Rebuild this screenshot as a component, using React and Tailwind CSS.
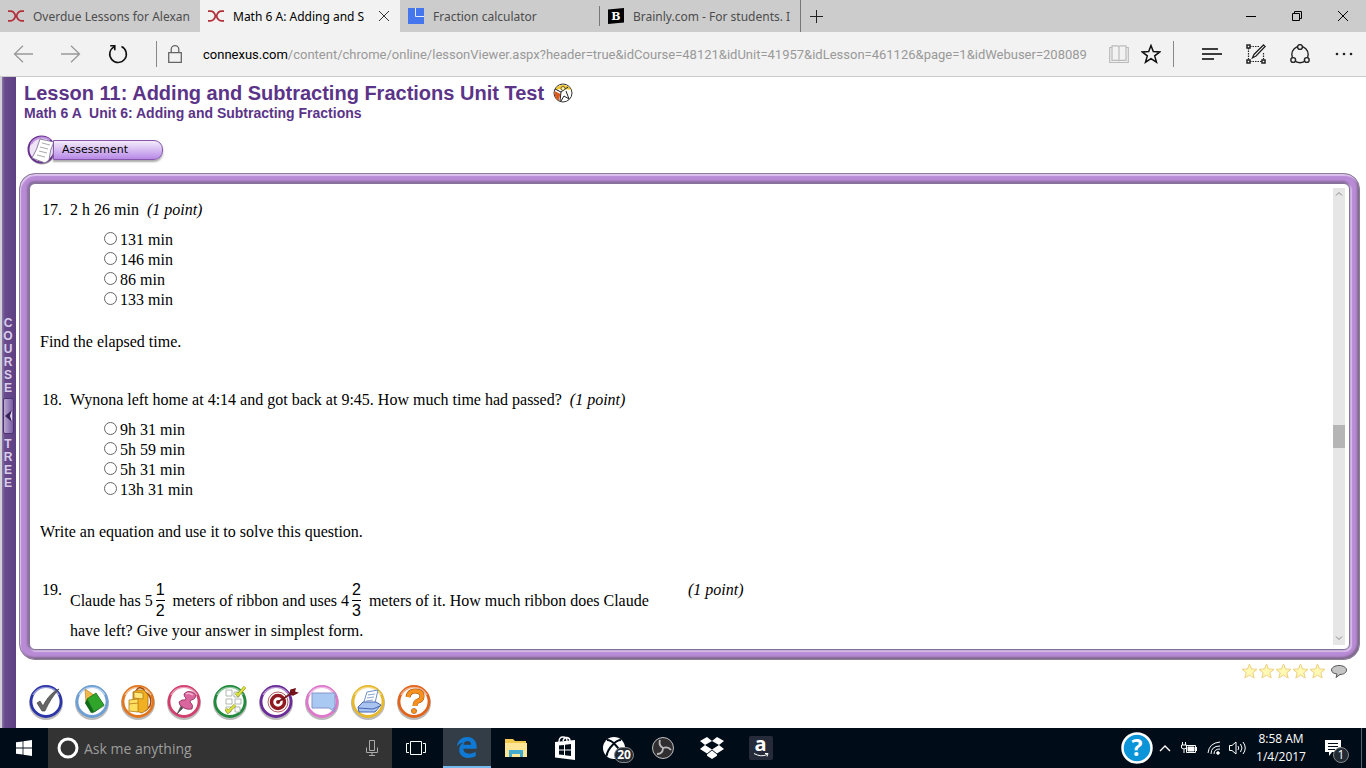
import { useState } from 'react';

const tabs = [
    { title: 'Overdue Lessons for Alexan', icon: 'connexus' },
    { title: 'Math 6 A: Adding and S', icon: 'connexus', active: true },
    { title: 'Fraction calculator', icon: 'calc' },
    { title: 'Brainly.com - For students. I', icon: 'brainly' },
];

const questions = [
    {
        id: 'q17',
        number: '17.',
        text: '2 h 26 min',
        options: ['131 min', '146 min', '86 min', '133 min'],
        next: 'Find the elapsed time.',
    },
    {
        id: 'q18',
        number: '18.',
        text: 'Wynona left home at 4:14 and got back at 9:45. How much time had passed?',
        options: ['9h 31 min', '5h 59 min', '5h 31 min', '13h 31 min'],
        next: 'Write an equation and use it to solve this question.',
    },
];

const TabIcon = ({ name }) => {
    if (name === 'connexus') {
        return (
            <svg viewBox="0 0 16 16" className="h-4 w-4 shrink-0" fill="none" stroke="#b3303a" strokeWidth="1.8" aria-hidden="true">
                <path d="M0 3.2h2.500Q6 3.200 7.500 8q-1.500 4.800-5 4.800H0M16 3.2h-2.500Q10 3.200 8.500 8q1.500 4.800 5 4.800H16M7 8h2" />
            </svg>
        );
    }
    if (name === 'calc') {
        return (
            <svg viewBox="0 0 16 16" className="h-4 w-4 shrink-0" aria-hidden="true">
                <path fill="#4576ee" d="M0 0h16v16H0z" />
                <path fill="none" stroke="#e4ecff" d="M7.500 0v8.500H16" />
            </svg>
        );
    }
    return (
        <svg viewBox="0 0 16 16" className="h-4 w-4 shrink-0" aria-hidden="true">
            <path fill="#000" d="M0 1.500L16 0v14.500L0 16z" />
            <text x="8" y="12" textAnchor="middle" fontSize="11" fontWeight="bold" fontFamily="DejaVu Serif, serif" fill="#fff">B</text>
        </svg>
    );
};

const TabBar = () => (
    <div className="flex h-8 shrink-0 items-stretch bg-[#cccccc] font-[Noto_Sans,sans-serif] text-xs">
        {tabs.map((tab, i) => (
            <div
                key={tab.title}
                className={
                    tab.active
                        ? 'flex w-[200px] items-center bg-[#f2f2f2] pl-2 text-black'
                        : 'flex w-[200px] items-center pl-2 text-[#4c4c4c]'
                }
            >
                <TabIcon name={tab.icon} />
                <span className={tab.active ? 'ml-[9px] w-[137px] pt-px whitespace-nowrap' : 'ml-[9px] pt-px whitespace-nowrap'}>
                    {tab.title}
                </span>
                {tab.active && (
                    <button type="button" aria-label="Close tab" className="ml-2">
                        <svg viewBox="0 0 12 12" className="h-3 w-3" stroke="#333" fill="none" aria-hidden="true">
                            <path d="M1 1l10 10M11 1L1 11" />
                        </svg>
                    </button>
                )}
                {i === 2 && <span className="ml-auto h-5 w-px bg-[#777]" />}
            </div>
        ))}
        <button type="button" aria-label="New tab" className="flex w-8 items-center justify-center border-l border-[#777]">
            <svg viewBox="0 0 13 13" className="h-[13px] w-[13px]" stroke="#222" fill="none" aria-hidden="true">
                <path d="M6.500 0v13M0 6.500h13" />
            </svg>
        </button>
        <div className="ml-auto flex">
            <button type="button" aria-label="Minimize" className="flex w-[46px] items-center justify-center">
                <svg viewBox="0 0 10 10" className="h-[10px] w-[10px]" stroke="#000" fill="none"><path d="M0 5.500h10" /></svg>
            </button>
            <button type="button" aria-label="Restore" className="flex w-[46px] items-center justify-center">
                <svg viewBox="0 0 10 10" className="h-[10px] w-[10px]" stroke="#000" fill="none"><path d="M.5 2.500h7v7h-7zM2.500 2.500v-2h7v7h-2" /></svg>
            </button>
            <button type="button" aria-label="Close" className="flex w-[46px] items-center justify-center">
                <svg viewBox="0 0 10 10" className="h-[10px] w-[10px]" stroke="#000" fill="none"><path d="M0 0l10 10M10 0L0 10" /></svg>
            </button>
        </div>
    </div>
);

const AddressBar = () => (
    <div className="flex h-[45px] shrink-0 items-center border-b border-[#cccccc] bg-[#f2f2f2]">
        <button type="button" aria-label="Back" className="ml-[13px]">
            <svg viewBox="0 0 20 18" className="h-[18px] w-5" fill="none" stroke="#999" strokeWidth="1.300"><path d="M20 9H1.500M10 .8L1.500 9l8.500 8.200" /></svg>
        </button>
        <button type="button" aria-label="Forward" className="ml-7">
            <svg viewBox="0 0 20 18" className="h-[18px] w-5" fill="none" stroke="#999" strokeWidth="1.300"><path d="M0 9h18.500M10 .8L18.500 9 10 17.200" /></svg>
        </button>
        <button type="button" aria-label="Refresh" className="ml-[27px]">
            <svg viewBox="0 0 20 20" className="h-5 w-5" fill="none" stroke="#111" strokeWidth="1.600"><path d="M13.500 2.600A8.300 8.300 0 1 1 6 2.900M2.200 1.700h4.600v4.600" /></svg>
        </button>
        <span className="ml-7 h-[26px] w-px bg-[#888]" />
        <svg viewBox="0 0 14 18" className="ml-[11px] h-[18px] w-[14px] shrink-0" fill="none" stroke="#666" strokeWidth="1.300" aria-hidden="true">
            <path d="M.7 7.700h12.600v9.600H.7zM3.200 7.700V4.500a3.800 3.800 0 0 1 7.600 0v3.200" />
        </svg>
        <div className="ml-[21px] min-w-0 flex-1 pt-px font-[Roboto,sans-serif] text-[13px] whitespace-nowrap text-[#999]">
            <span className="text-black">connexus.com</span>
            /content/chrome/online/lessonViewer.aspx?header=true&amp;idCourse=48121&amp;idUnit=41957&amp;idLesson=461126&amp;page=1&amp;idWebuser=208089
        </div>
        <button type="button" aria-label="Reading view" className="ml-2">
            <svg viewBox="0 0 20 18" className="h-[18px] w-5" fill="none" stroke="#bbb" strokeWidth="1.200"><path d="M3 .8h5.500q1.500 0 1.500 1.500v14q0-1-1.500-1H3zM17 .8h-5.500q-1.500 0-1.500 1.500v14q0-1 1.500-1H17zM3 2.500H.7v15h18.600v-15H17" /></svg>
        </button>
        <button type="button" aria-label="Favorite" className="ml-3">
            <svg viewBox="0 0 20 20" className="h-5 w-5" fill="none" stroke="#111" strokeWidth="1.500"><path d="M10 1.500l2.300 6.100 6.500.3-5.100 4 1.800 6.300L10 14.600l-5.500 3.600 1.800-6.300-5.100-4 6.500-.3z" /></svg>
        </button>
        <span className="ml-3 h-[26px] w-px bg-[#888]" />
        <button type="button" aria-label="Hub" className="ml-7">
            <svg viewBox="0 0 20 12" className="h-3 w-5" stroke="#000" strokeWidth="1.300"><path d="M0 1h16M0 6h20M0 11h12" /></svg>
        </button>
        <button type="button" aria-label="Make a web note" className="ml-6">
            <svg viewBox="0 0 20 20" className="h-5 w-5" fill="none" stroke="#222">
                <path strokeWidth="1.200" strokeDasharray="1.500 1" d="M4 2.500h9M2.500 4v12M4 17.500h12M17.500 9v7" />
                <path fill="#fff" strokeWidth="1.500" d="M1 1h3v3H1zM1 16h3v3H1zM16 16h3v3h-3z" />
                <path fill="#fff" strokeWidth="1.300" d="M17.500 1l1.600 1.500L10 12l-3.500 1.800L8 10.500z" />
            </svg>
        </button>
        <button type="button" aria-label="Share" className="ml-6">
            <svg viewBox="0 0 20 20" className="h-5 w-5" fill="none" stroke="#222" strokeWidth="1.400">
                <circle cx="10" cy="10.500" r="8.200" />
                <g fill="#f2f2f2"><circle cx="10" cy="3" r="2.400" /><circle cx="3.200" cy="16" r="2.400" /><circle cx="16.800" cy="16" r="2.400" /></g>
            </svg>
        </button>
        <button type="button" aria-label="More" className="ml-6 mr-3">
            <svg viewBox="0 0 20 4" className="h-1 w-5" fill="#222"><circle cx="3" cy="2" r="1.300" /><circle cx="10" cy="2" r="1.300" /><circle cx="17" cy="2" r="1.300" /></svg>
        </button>
    </div>
);

const CourseTree = () => (
    <aside className="flex w-4 shrink-0 flex-col items-center border-l-2 border-[#d4d0da] bg-linear-to-r from-[#8b79a3] via-[#694a8d] via-20% to-[#5d4183] pt-60 pr-[2px] font-[Liberation_Sans,sans-serif] text-xs leading-[13px] font-bold text-[#d9cde8]">
        {'COURSE'.split('').map((c, i) => <span key={i}>{c}</span>)}
        <button type="button" aria-label="Toggle course tree" className="mt-[3px] mb-1 flex h-9 w-[11px] items-center justify-center rounded-xs border border-[#4b3470] bg-linear-to-r from-[#b9a7d0] to-[#7b5ca4]">
            <svg viewBox="0 0 7 12" className="h-3 w-[7px]"><path d="M7 0v12L0 6z" fill="#3a2358" /><path d="M7 0v12L5 6z" fill="#e3d8f0" /></svg>
        </button>
        {'TREE'.split('').map((c, i) => <span key={i}>{c}</span>)}
    </aside>
);

const Fraction = ({ top, bottom }) => (
    <span className="mr-2 ml-[3px] flex flex-col items-center font-[Liberation_Sans,sans-serif] leading-5">
        <span className="h-[21px] border-b border-black">{top}</span>
        <span className="h-5">{bottom}</span>
    </span>
);

const Question = ({ q, value, onChange }) => (
    <>
        <fieldset>
            <legend className="flex h-5 items-center">
                <span className="w-7 pl-[2px]">{q.number}</span>
                <span className="ml-[2px]">{q.text}</span>
                <i className="ml-2">(1 point)</i>
            </legend>
            <div className="mt-[10px] ml-16 flex flex-col">
                {q.options.map((opt) => (
                    <label key={opt} className="flex h-5 items-center">
                        <input
                            type="radio"
                            name={q.id}
                            checked={value === opt}
                            onChange={() => onChange(opt)}
                            className="mr-[3px] mb-[3px] h-[13px] w-[13px] appearance-none rounded-full border border-[#666] bg-white checked:border-4"
                        />
                        {opt}
                    </label>
                ))}
            </div>
        </fieldset>
        <p className="mt-[22px] mb-[38px] h-5">{q.next}</p>
    </>
);

const Assessment = () => {
    const [answers, setAnswers] = useState({});

    return (
        <section className="flex min-h-0 flex-1 rounded-[16px] border border-[#8b7f94] bg-[#b98ad6] p-[9px] shadow-[inset_1px_2px_1px_#dcc3ee,inset_-2px_-2px_2px_#7f6a8c]">
            <div className="flex min-w-0 flex-1 rounded-[6px] border border-[#86739a] bg-white p-1 pl-[10px] shadow-[-1px_-1px_2px_1px_#8a6fa0,1px_1px_1px_1px_#dcc3ee]">
                <div className="min-h-0 min-w-0 flex-1 overflow-hidden pt-3 font-[Liberation_Serif,serif] text-base leading-5 text-black">
                    {questions.map((q) => (
                        <Question
                            key={q.id}
                            q={q}
                            value={answers[q.id]}
                            onChange={(v) => setAnswers({ ...answers, [q.id]: v })}
                        />
                    ))}
                    <div className="flex">
                        <span className="w-7 shrink-0 pl-[2px]">19.</span>
                        <div className="ml-[2px] w-[618px]">
                            <div className="flex items-center whitespace-nowrap">
                                <span>Claude has 5</span>
                                <Fraction top="1" bottom="2" />
                                <span>meters of ribbon and uses 4</span>
                                <Fraction top="2" bottom="3" />
                                <span>meters of it. How much ribbon does Claude</span>
                            </div>
                            <p>have left? Give your answer in simplest form.</p>
                        </div>
                        <i>(1 point)</i>
                    </div>
                </div>
                <div className="flex w-3 flex-col items-center bg-[#e6e6e6]">
                    <svg viewBox="0 0 8 5" className="mt-[3px] h-[5px] w-2 shrink-0" fill="none" stroke="#888"><path d="M1 4.500l3-3 3 3" /></svg>
                    <div className="flex-1" />
                    <div className="h-[23px] w-full bg-[#b5b5b5]" />
                    <div className="h-[188px]" />
                    <svg viewBox="0 0 8 5" className="mb-1 h-[5px] w-2 shrink-0" fill="none" stroke="#888"><path d="M1 .5l3 3 3-3" /></svg>
                </div>
            </div>
        </section>
    );
};

const tools = [
    { label: 'Tasks', color: '#2b35a8', art: <path d="M9 19l3-2 3 5C19 14 24 8 31 5c-6 7-10 13-14 22h-3z" fill="#666" stroke="#333" strokeWidth=".6" /> },
    {
        label: 'Lessons',
        color: '#6d9fd4',
        art: (
            <>
                <path d="M11 5l9 6-6 8-2 1z" fill="#f0b84a" stroke="#a9781d" strokeWidth=".6" />
                <path d="M13 15l9-6 8 12-10 7z" fill="#2fa62a" stroke="#146b18" strokeWidth=".8" />
                <path d="M13 15l-2 4 6 10 3-1z" fill="#0e6b16" />
                <path d="M18 29l2-1 10-7v1z" fill="#d9f0d4" stroke="#146b18" strokeWidth=".5" />
            </>
        ),
    },
    {
        label: 'Locker',
        color: '#e2761f',
        art: (
            <>
                <path d="M25 8q8 4 5 14l-5 5M16 8q1-5 5-4t3 4" fill="none" stroke="#a3480e" strokeWidth="1.500" />
                <path d="M13 8l4-2h7l4 5v14l-6 4-9-3z" fill="#f0b021" stroke="#a86c12" strokeWidth=".8" />
                <path d="M9 16l9-1v13l-9-1zM9 20l9-1" fill="#ffdf60" stroke="#b47915" strokeWidth=".8" />
                <path d="M14 8l9 1v6l-9-1z" fill="#ffe87b" stroke="#b47915" strokeWidth=".8" />
            </>
        ),
    },
    {
        label: 'Bulletin board',
        color: '#d23f6e',
        art: (
            <>
                <path d="M15 22l-4 8 6-6z" fill="#555" stroke="#444" strokeWidth=".6" />
                <path d="M18 10q3-4 8-2 5 2 3 6-2 2-4 2l-1 2q4 3 2 7-5 1-8-1-5-2-5-6 3-3 6-2l1-2q-2-1-2-4z" fill="#d9669c" stroke="#8b2659" strokeWidth=".8" />
                <path d="M20 10q3-2 7 1" fill="none" stroke="#f3b3d0" strokeWidth="1.500" />
            </>
        ),
    },
    {
        label: 'Gradebook',
        color: '#218a3c',
        art: (
            <>
                <path d="M14 6h6v6h-6zM22 8h5v5h-5zM14 15h6v5h-6zM23 15h6v5h-6zM14 23h5v5h-5zM23 23h5v5h-5z" fill="#fff" stroke="#9aa79c" strokeWidth=".8" />
                <path d="M24 9l2 2 7-8M14 25l2 3 7-7" fill="none" stroke="#7d8a12" strokeWidth="3" />
                <path d="M24 9l2 2 7-8M14 25l2 3 7-7" fill="none" stroke="#e0e23c" strokeWidth="2" />
            </>
        ),
    },
    {
        label: 'Goals',
        color: '#6b2c99',
        art: (
            <>
                <circle cx="20" cy="18" r="10" fill="#fff" stroke="#8f1a1f" strokeWidth=".7" />
                <circle cx="20" cy="18" r="6.500" fill="#fff" stroke="#8f1a1f" strokeWidth="3.500" /><circle cx="20" cy="18" r="2" fill="#8f1a1f" />
                <path d="M20 18L37 7M32 10l1-4 4-1-1 3 3 1-4 2z" stroke="#6e1418" strokeWidth="1.500" fill="#8f1a1f" />
            </>
        ),
    },
    { label: 'Messages', color: '#dd78cb', art: <path d="M8 9h23v15h-2l2 4-6-4H8z" fill="#a9c9f2" stroke="#8794c9" /> },
    {
        label: 'Print',
        color: '#e6b92c',
        art: (
            <>
                <path d="M17 8l11-2-3 13-12 2z" fill="#fff" stroke="#6d8fc7" /><path d="M18 11l7-1M17 14l7-1M16 17l7-1" stroke="#8ba5d4" />
                <path d="M8 23l5-5h13l5 3-6 7H9z" fill="#a9c4f0" stroke="#4668b0" /><path d="M8 24l15 1 7-3" fill="none" stroke="#4668b0" />
            </>
        ),
    },
    {
        label: 'Help',
        color: '#e2641b',
        art: (
            <>
                <path d="M12 13q1-6 7-6 7 0 7 5 0 4-4 5-3 1-3 5" fill="none" stroke="#9c4d0c" strokeWidth="5" /><circle cx="18" cy="27" r="2.800" fill="#9c4d0c" />
                <path d="M12 13q1-6 7-6 7 0 7 5 0 4-4 5-3 1-3 5" fill="none" stroke="#f6901e" strokeWidth="4" /><circle cx="18" cy="27" r="2.300" fill="#f6901e" />
            </>
        ),
    },
];

const ToolRow = () => (
    <nav aria-label="Course tools" className="flex gap-[10px]">
        {tools.map((t) => (
            <button key={t.label} type="button" aria-label={t.label}>
                <svg viewBox="0 0 36 36" className="h-9 w-9 overflow-visible" aria-hidden="true">
                    <circle cx="18" cy="19" r="15.500" fill="none" stroke="#bbb" strokeWidth="3" />
                    <circle cx="18" cy="17.500" r="15" fill="#fff" stroke={t.color} strokeWidth="2.800" />
                    <path d="M5 11A15 15 0 0 1 31 11" fill="none" stroke="#fff" strokeOpacity=".5" strokeWidth="1.500" />
                    {t.art}
                </svg>
            </button>
        ))}
    </nav>
);

const Lesson = () => (
    <main className="flex min-h-0 min-w-0 flex-1 flex-col pr-[6px] pl-[3px]">
        <header className="flex h-24 shrink-0 flex-col pl-[5px] font-[Liberation_Sans,sans-serif] font-bold text-[#5b3488]">
            <h1 className="mt-1 flex items-center text-xl leading-6">
                Lesson 11: Adding and Subtracting Fractions Unit Test
                <svg viewBox="0 0 20 20" className="ml-[9px] h-5 w-5" aria-hidden="true">
                    <circle cx="10" cy="10" r="9" fill="#fff" stroke="#333" />
                    <path d="M2 7a9 9 0 0 1 16 0l-6-1-2 2-3-2z" fill="#f2c52d" />
                    <path d="M1.500 8l6 3-2 7Q1 15 1.500 8z" fill="#d95b20" />
                    <path d="M2 6l6 3 7-5M8 9l-1 9M13 8l3 8M8 18l3-5 5 3" fill="none" stroke="#222" /><circle cx="10" cy="5.500" r="2" fill="#fff2a5" stroke="#333" strokeWidth=".7" />
                </svg>
            </h1>
            <h2 className="text-sm leading-4 whitespace-pre">Math 6 A  Unit 6: Adding and Subtracting Fractions</h2>
            <div className="mt-[13px] flex items-center">
                <svg viewBox="0 0 30 32" className="ml-[3px] h-8 w-[30px] shrink-0" aria-hidden="true">
                    <circle cx="15" cy="17" r="13.500" fill="#aaa" />
                    <circle cx="14.500" cy="15.500" r="13" fill="#efe4f7" stroke="#68308f" strokeWidth="2" />
                    <path d="M4 10a13 13 0 0 1 19-4" fill="none" stroke="#bd91dc" strokeWidth="2" />
                    <path d="M13 5l14 3q-4 7-5 18l-4 3-13-5q5-8 8-19z" fill="#fff" stroke="#75668a" strokeWidth=".8" />
                    <path d="M15 9l8 2M13 13l8 2M12 17l8 2M10 21l8 2" stroke="#aaa" />
                </svg>
                <button type="button" className="-ml-1 h-5 w-[110px] rounded-r-[9px] border border-[#8657ab] bg-linear-to-b from-[#f5ecfc] to-[#b889e6] pl-2 text-left font-[DejaVu_Sans,sans-serif] text-[11px] leading-4 font-normal text-black shadow-[0_2px_2px_#aaa]">
                    Assessment
                </button>
            </div>
        </header>
        <Assessment />
        <footer className="flex h-[68px] shrink-0 items-start justify-between pt-[3px] pr-3 pl-[9px]">
            <div className="pt-[21px]"><ToolRow /></div>
            <div className="flex items-center">
                {[1, 2, 3, 4, 5].map((n) => (
                    <button key={n} type="button" aria-label={`Rate ${n}`}>
                        <svg viewBox="0 0 17 16" className="h-4 w-[17px]"><path d="M8.500 1l2 5 5.500.3-4.200 3.500 1.400 5.200-4.700-2.900L3.800 15l1.400-5.200L1 6.300 6.500 6z" fill="#fff9b4" stroke="#efcf82" strokeLinejoin="round" /></svg>
                    </button>
                ))}
                <button type="button" aria-label="Comment" className="ml-1">
                    <svg viewBox="0 0 18 14" className="h-[14px] w-[18px]"><path d="M9 1.500c4 0 7.500 1.800 7.500 4.500s-3 4.500-6.500 4.500l-4 3 1-3.500C4 9.500 1.500 8.500 1.500 6S5 1.500 9 1.500z" fill="#c5c5c5" stroke="#555" /></svg>
                </button>
            </div>
        </footer>
    </main>
);

const Taskbar = () => (
    <div className="flex h-10 shrink-0 items-stretch bg-[#000c17] text-white">
        <button type="button" aria-label="Start" className="flex w-12 items-center justify-center">
            <svg viewBox="0 0 16 16" className="h-4 w-4" fill="#fff"><path d="M0 2.300L6.600 1.400v6.200H0zM7.400 1.300L16 0v7.600H7.400zM0 8.400h6.600v6.200L0 13.700zM7.400 8.400H16V16l-8.600-1.300z" /></svg>
        </button>
        <label className="flex w-[344px] items-center bg-[#333333] pl-2">
            <svg viewBox="0 0 24 24" className="h-6 w-6 shrink-0" aria-hidden="true"><circle cx="12" cy="12" r="9" fill="none" stroke="#fff" strokeWidth="3" /></svg>
            <input type="text" aria-label="Search" placeholder="Ask me anything" className="ml-1 min-w-0 flex-1 pt-px text-sm outline-none placeholder:text-[#9d9d9d]" />
            <svg viewBox="0 0 12 16" className="mr-[14px] h-4 w-3" fill="none" stroke="#aaa" aria-hidden="true"><path d="M3.500.5h5v10h-5zM.5 7.500v5h11v-5M6 12.500v3M3 15.500h6" /></svg>
        </label>
        <button type="button" aria-label="Task view" className="flex w-12 items-center justify-center">
            <svg viewBox="0 0 20 14" className="h-[14px] w-5" fill="none" stroke="#fff"><path d="M4.500.5h11v13h-11zM3 2.500H.5v9H3M17 2.500h2.500v9H17" /></svg>
        </button>
        <button type="button" aria-label="Edge" className="ml-[3px] flex w-12 items-center justify-center border-b-2 border-[#76b9ed] bg-[#333d47]">
            <svg viewBox="0 0 24 24" className="h-[22px] w-[22px]" fill="#0f7ad6"><path d="M1 11C2 4 7 1 12 1c7 0 10.500 5 10.500 10.500V14H8c.3 4 3 5.300 6.500 5.300 3 0 5-.8 7-2v4.900C19 23.500 16 24 13 24c-6 0-9.500-4-9.500-9 0-4 2-6.500 5-8C5 7.500 2.500 9 1 11zm7.200-1.500h8.300C16.500 7 15 5.500 12.500 5.500S8.500 7 8.200 9.500z" /></svg>
        </button>
        <button type="button" aria-label="File Explorer" className="flex w-[49px] items-center justify-center">
            <svg viewBox="0 0 22 18" className="h-[18px] w-[22px]"><path fill="#f0c94f" d="M0 0h8l2 2h11v16H0z" /><path fill="#ffe696" d="M0 4h22v14H0z" /><path fill="#44abd0" d="M4 18v-7h14v7h-3v-3H7v3z" /></svg>
        </button>
        <button type="button" aria-label="Store" className="flex w-[49px] items-center justify-center">
            <svg viewBox="0 0 22 24" className="h-6 w-[22px]">
                <path fill="none" stroke="#fff" strokeWidth="1.400" d="M5 6q0-5 4-5t4 4M9 5q1-4 4-3.500T16 5" />
                <path fill="#fff" d="M1 6l20-2v20L1 21.500z" />
                <path fill="#000c17" d="M5 9.500l5-.6v4.600H5zM11 8.800l6-.7v5.400h-6zM5 14.500h5v4.600l-5-.6zM11 14.500h6v5.400l-6-.7z" />
            </svg>
        </button>
        <button type="button" aria-label="Xbox" className="relative flex w-[49px] items-center justify-center">
            <svg viewBox="0 0 22 22" className="h-[22px] w-[22px]">
                <circle cx="11" cy="11" r="11" fill="#fff" />
                <path d="M4 3q4 0 8 4.500Q17.500 13 18.500 19M18 3q-4 0-8 4.500Q4.500 13 3.500 19" fill="none" stroke="#000c17" strokeWidth="2" />
            </svg>
            <span className="absolute top-[19px] left-[25px] flex h-4 w-5 items-center justify-center rounded-full border border-[#888] bg-[#222b34] text-xs font-bold">20</span>
        </button>
        <button type="button" aria-label="OBS" className="flex w-[49px] items-center justify-center">
            <svg viewBox="0 0 24 24" className="h-6 w-6" fill="none">
                <circle cx="12" cy="12" r="10.500" fill="#302e31" stroke="#c0c0c0" />
                <path d="M9 4q-2 5 3 8 5-2 8 2M12 12q0 6-6 6" stroke="#bbb" strokeWidth="1.800" />
            </svg>
        </button>
        <button type="button" aria-label="Dropbox" className="flex w-[49px] items-center justify-center">
            <svg viewBox="0 0 24 22" className="h-[22px] w-6" fill="#fff"><path d="M7 0l5 4-7 4-5-4zM17 0l7 4-5 4-7-4zM0 12l5-4 7 4.500-5 4zM24 12l-5-4-7 4.500 5 4zM7 17.500l5-4 5 4v1.200L12 22l-5-3.300z" /></svg>
        </button>
        <button type="button" aria-label="Amazon" className="flex w-[49px] items-center justify-center">
            <span className="flex h-6 w-6 flex-col items-center justify-center rounded-xs bg-[#252b38]">
                <span className="-mt-1 text-xl leading-[18px] font-bold">a</span>
                <svg viewBox="0 0 16 5" className="h-[5px] w-4" fill="none" stroke="#fff"><path d="M1 .5q7 4 13 1M12 .5h3l-1 3" /></svg>
            </span>
        </button>
        <div className="ml-auto flex items-center">
            <button type="button" aria-label="Help">
                <svg viewBox="0 0 32 32" className="h-8 w-8"><circle cx="16" cy="16" r="14.500" fill="#0b94d8" stroke="#fff" strokeWidth="2.500" /><text x="16" y="24" textAnchor="middle" fontSize="23" fontWeight="bold" fill="#fff">?</text></svg>
            </button>
            <svg viewBox="0 0 12 8" className="ml-[6px] h-2 w-3" fill="none" stroke="#fff" strokeWidth="1.400"><path d="M1 7l5-5 5 5" /></svg>
            <svg viewBox="0 0 16 12" className="ml-[10px] h-3 w-4" fill="none" stroke="#fff"><path d="M5.500 3.500h9v7h-9zM15.500 5v4M1.500 0v3M4.500 0v3M.5 3h5v3q-2.500 2-5 0zM3 7v4" /><path fill="#fff" d="M7 5h6v4H7z" /></svg>
            <svg viewBox="0 0 14 14" className="ml-[10px] h-[14px] w-[14px]" fill="none" stroke="#fff"><path d="M1 12Q2 2 13 1M4 13Q4 5 13 5M7 13Q7 8 13 8" /><circle cx="11" cy="12" r="1.300" fill="#fff" /></svg>
            <svg viewBox="0 0 17 14" className="ml-2 h-[14px] w-[17px]" fill="none" stroke="#fff"><path d="M.5 4.500H3l4-3.500v12L3 9.500H.5zM9 5q1.500 2 0 4M11.500 3q3 4 0 8M14 1q4.500 6 0 12" /></svg>
            <time className="ml-[11px] flex w-[48px] flex-col items-center text-xs leading-[18px] whitespace-nowrap"><span>8:58 AM</span><span>1/4/2017</span></time>
            <button type="button" aria-label="Notifications" className="relative ml-5 mr-5">
                <svg viewBox="0 0 16 16" className="h-4 w-4"><path fill="#fff" d="M0 0h16v12H7l-3 4v-4H0z" /><path stroke="#000c17" d="M3 3.500h10M3 6.500h10M3 9.500h7" /></svg>
                <span className="absolute top-[7px] left-2 flex h-4 w-4 items-center justify-center rounded-full border border-[#888] bg-[#222b34] text-xs">1</span>
            </button>
            <span className="h-full w-[5px] border-l border-[#5a636c]" />
        </div>
    </div>
);

const App = () => (
    <div className="flex h-screen flex-col overflow-hidden bg-white font-[Open_Sans,sans-serif] text-[13px]">
        <TabBar />
        <AddressBar />
        <div className="flex min-h-0 flex-1">
            <CourseTree />
            <Lesson />
        </div>
        <Taskbar />
    </div>
);

export default App;
